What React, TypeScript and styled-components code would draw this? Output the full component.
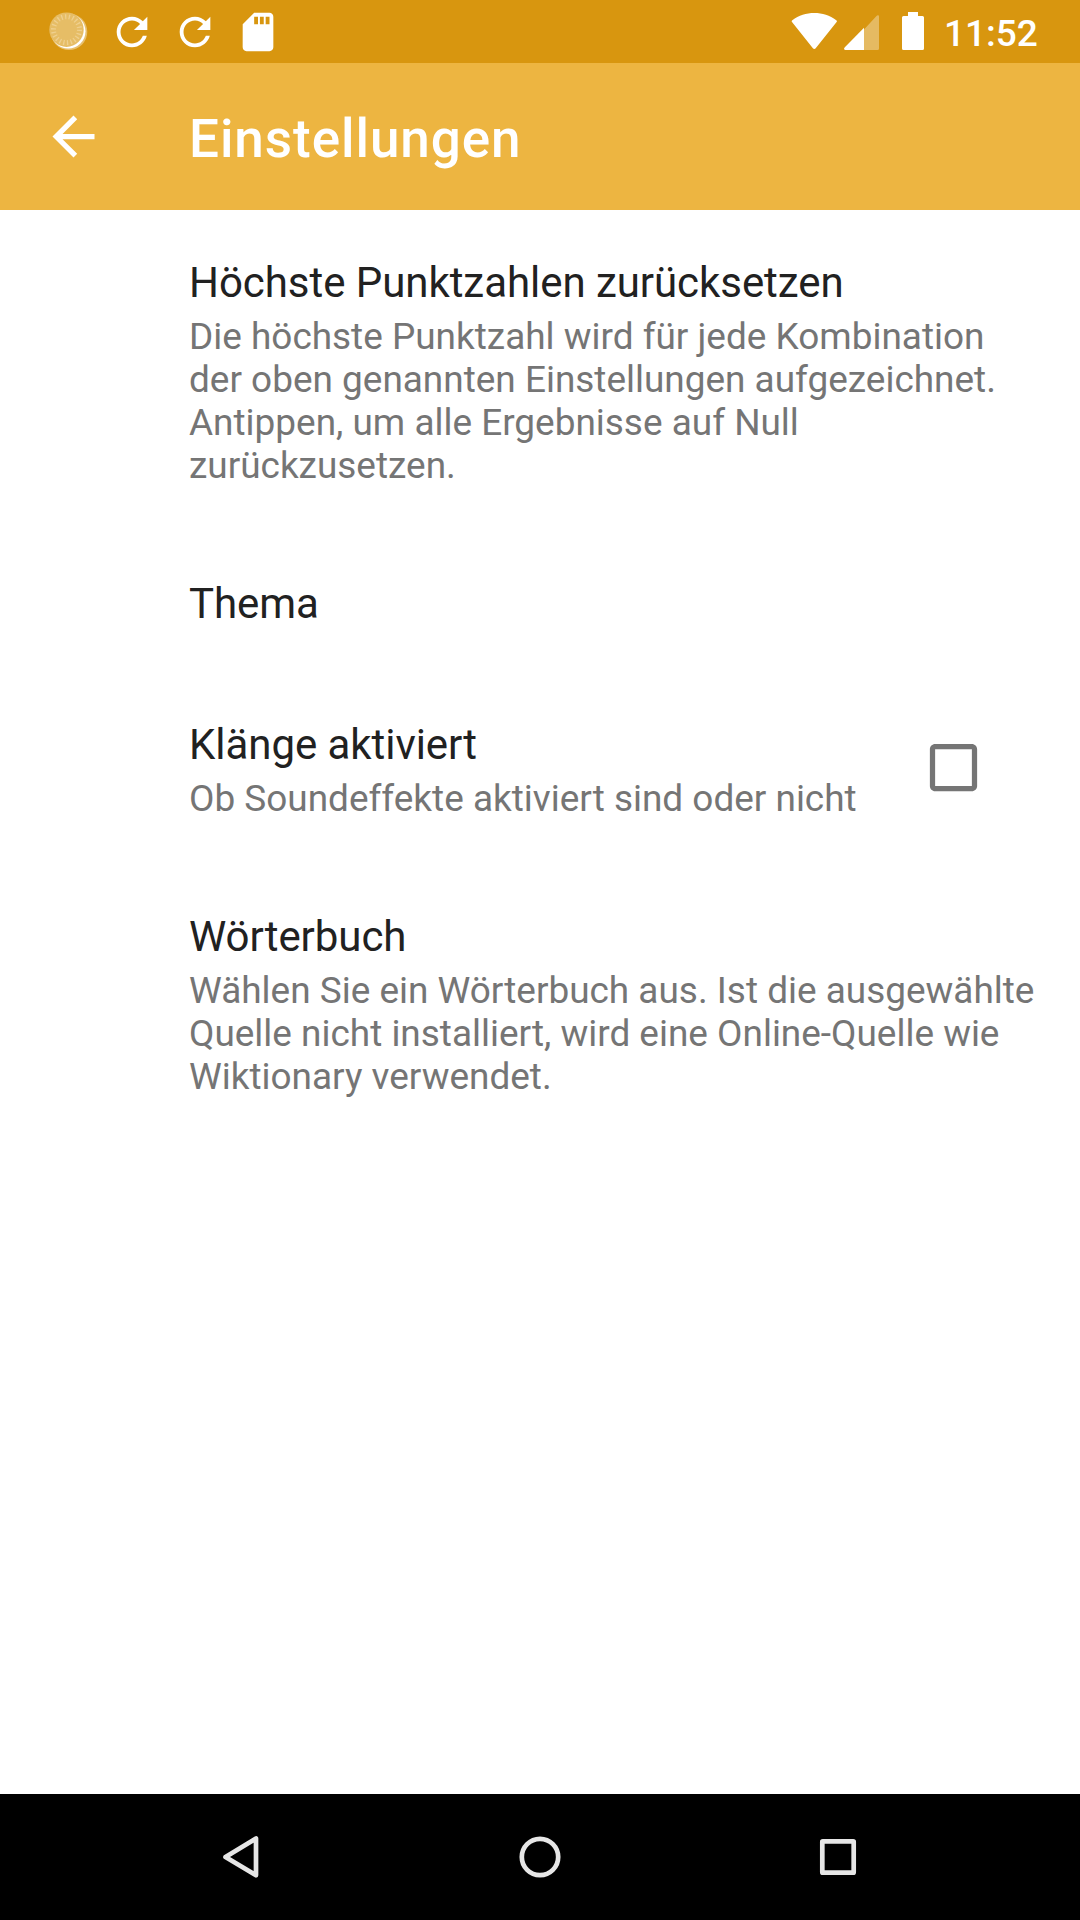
import React from "react";
import styled, { createGlobalStyle } from "styled-components";

const Global = createGlobalStyle`
  * { box-sizing: border-box; }
  body { margin: 0; background: #fff; font-family: Roboto, sans-serif; }
`;

const Screen = styled.div`
  width: 1080px;
  height: 1920px;
  display: flex;
  flex-direction: column;
  background: #fff;
  overflow: hidden;
`;

const StatusBar = styled.header`
  height: 63px;
  flex: none;
  background: #d8960f;
  display: flex;
  justify-content: space-between;
`;

const Notifications = styled.div`
  display: flex;
  gap: 17px;
  padding: 9px 0 0 46px;
`;

const NotificationIcon = styled.svg`
  width: 46px;
  height: 46px;
  display: block;
  fill: #fff;
`;

const StatusRight = styled.div`
  width: 289px;
  display: flex;
`;

const StatusIcon = styled.svg<{ $gap: number }>`
  height: 63px;
  flex: none;
  display: block;
  fill: #fff;
  margin-right: ${p => p.$gap}px;
`;

const Clock = styled.time`
  color: #fff;
  font-weight: 500;
  font-size: 37px;
  line-height: 63px;
  padding-top: 1.5px;
`;

const AppBar = styled.div`
  height: 147px;
  flex: none;
  background: #edb541;
  display: flex;
  align-items: center;
  padding-left: 42px;
  gap: 84px;
`;

const Back = styled.svg`
  width: 63px;
  height: 63px;
  display: block;
  fill: #fff;
`;

const Heading = styled.h1`
  margin: 0;
  padding-top: 5px;
  color: #fff;
  font-weight: 500;
  font-size: 53px;
  line-height: 62px;
  letter-spacing: 0.95px;
`;

const List = styled.main`
  flex: 1;
  display: flex;
  flex-direction: column;
  gap: 92px;
  padding: 48px 0 0 189px;
`;

const Row = styled.section`
  display: flex;
  align-items: flex-start;
`;

const Texts = styled.div`
  flex: 1;
`;

const Title = styled.h2<{ $single: boolean }>`
  margin: 0;
  font-weight: 400;
  font-size: 42px;
  line-height: 50px;
  height: ${p => (p.$single ? 49 : 50)}px;
  letter-spacing: -0.05px;
  color: #212121;
  white-space: nowrap;
`;

const Summary = styled.p`
  margin: 7px 0 0;
  font-size: 36.95px;
  line-height: 43px;
  color: #757575;
  white-space: nowrap;
`;

const Checkbox = styled.svg`
  width: 63px;
  height: 63px;
  margin: 16px 95px 0 0;
  fill: #757575;
`;

const NavBar = styled.nav`
  height: 126px;
  flex: none;
  background: #000;
  display: flex;
  justify-content: center;
`;

const NavKey = styled.svg`
  width: 298px;
  height: 126px;
  display: block;
  fill: none;
  stroke: #e6e6e6;
  stroke-width: 4.7;
  stroke-linejoin: round;
`;

type ItemProps = { title: string; lines?: string[]; children?: React.ReactNode };

const Item = ({ title, lines, children }: ItemProps) => (
  <Row>
    <Texts>
      <Title $single={!lines}>{title}</Title>
      {lines && (
        <Summary>
          {lines.map((l, i) => (
            <React.Fragment key={l}>{i > 0 && <br />}{l}</React.Fragment>
          ))}
        </Summary>
      )}
    </Texts>
    {children}
  </Row>
);

const SpinnerIcon = () => (
  <NotificationIcon viewBox="0 0 46 46">
    <circle cx="23" cy="22.800" r="18.300" fillOpacity=".4" />
    <circle cx="22.200" cy="22.300" r="17.300" />
    <circle cx="20.500" cy="20.700" r="17.200" fill="#e6bd66" />
    <circle cx="20.500" cy="20.700" r="13" fill="none" stroke="#efd08f" strokeWidth="5" strokeDasharray="1.300 2.413" />
  </NotificationIcon>
);

const RefreshIcon = () => (
  <NotificationIcon viewBox="0 0 24 24">
    <path d="M17.65 6.35C16.2 4.9 14.21 4 12 4c-4.42 0-7.99 3.58-7.99 8s3.57 8 7.99 8c3.73 0 6.84-2.55 7.73-6h-2.08c-.82 2.33-3.04 4-5.65 4-3.31 0-6-2.69-6-6s2.69-6 6-6c1.66 0 3.14.69 4.22 1.78L13 11h7V4l-2.35 2.35z" />
  </NotificationIcon>
);

export default function App() {
  return (
    <Screen>
      <Global />
      <StatusBar>
        <Notifications>
          <SpinnerIcon />
          <RefreshIcon />
          <RefreshIcon />
          <NotificationIcon viewBox="0 0 24 24">
            <path d="M18 2h-8L4.02 8 4 20c0 1.1.9 2 2 2h12c1.1 0 2-.9 2-2V4c0-1.1-.9-2-2-2zm-6 6h-2V4h2v4zm3 0h-2V4h2v4zm3 0h-2V4h2v4z" />
          </NotificationIcon>
        </Notifications>
        <StatusRight>
          <StatusIcon $gap={7} width="46" viewBox="0 0 46 63">
            <path d="M1.300 20.200C7.800 15.500 15.300 13 23.300 13s15.500 2.500 22 7.200c.7.500.8 1.200.3 1.900L24.700 48.200c-.8 1-2 1-2.800 0L1 22.100c-.5-.7-.4-1.400.3-1.900z" />
          </StatusIcon>
          <StatusIcon $gap={23} width="35" viewBox="0 0 35 63">
            <path fillOpacity=".35" d="M20 50V29.500L32.500 16c1-1.200 2.500-1 2.500.7V48.500q0 1.500-1.500 1.500z" />
            <path d="M1.300 50C0 50-.4 48.600.6 47.500L20 27.800V50z" />
          </StatusIcon>
          <StatusIcon $gap={20} width="22" viewBox="0 0 22 63">
            <path d="M6 12h10v4h4.500q1.500 0 1.500 1.500v31q0 1.500-1.500 1.500h-19Q0 50 0 48.500v-31Q0 16 1.500 16H6z" />
          </StatusIcon>
          <Clock>11:52</Clock>
        </StatusRight>
      </StatusBar>
      <AppBar>
        <Back viewBox="0 0 24 24">
          <path d="M20 11H7.83l5.59-5.59L12 4l-8 8 8 8 1.41-1.41L7.83 13H20v-2z" />
        </Back>
        <Heading>Einstellungen</Heading>
      </AppBar>
      <List>
        <Item
          title="Höchste Punktzahlen zurücksetzen"
          lines={[
            "Die höchste Punktzahl wird für jede Kombination",
            "der oben genannten Einstellungen aufgezeichnet.",
            "Antippen, um alle Ergebnisse auf Null",
            "zurückzusetzen.",
          ]}
        />
        <Item title="Thema" />
        <Item title="Klänge aktiviert" lines={["Ob Soundeffekte aktiviert sind oder nicht"]}>
          <Checkbox viewBox="0 0 24 24">
            <path d="M19 5v14H5V5h14m0-2H5c-1.100 0-2 .9-2 2v14c0 1.100.9 2 2 2h14c1.100 0 2-.9 2-2V5c0-1.100-.9-2-2-2z" />
          </Checkbox>
        </Item>
        <Item
          title="Wörterbuch"
          lines={[
            "Wählen Sie ein Wörterbuch aus. Ist die ausgewählte",
            "Quelle nicht installiert, wird eine Online-Quelle wie",
            "Wiktionary verwendet.",
          ]}
        />
      </List>
      <NavBar>
        <NavKey viewBox="0 0 298 126"><path d="M163 44.500v36.800L132.500 63z" /></NavKey>
        <NavKey viewBox="0 0 298 126"><circle cx="149" cy="63" r="18.200" /></NavKey>
        <NavKey viewBox="0 0 298 126"><rect x="133.300" y="47.300" width="31.400" height="31.400" rx="0.500" /></NavKey>
      </NavBar>
    </Screen>
  );
}
